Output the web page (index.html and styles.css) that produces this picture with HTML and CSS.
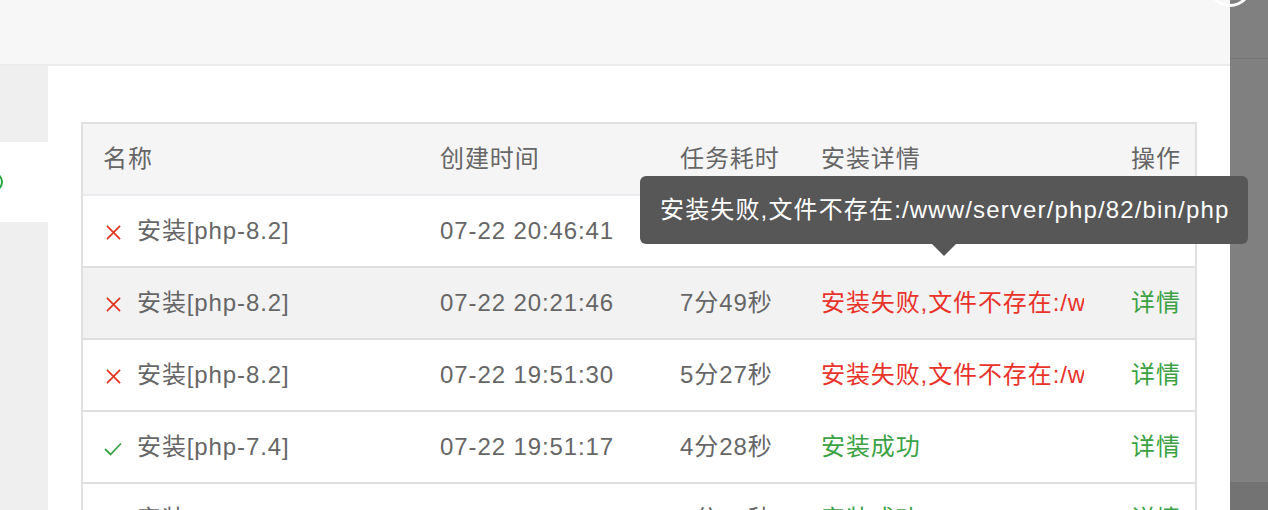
FILE: index.html
```html
<!DOCTYPE html>
<html lang="zh-CN">
<head>
    <meta charset="UTF-8">
    <meta name="viewport" content="width=device-width, initial-scale=1.0">
    <title>安装任务</title>
    <link rel="stylesheet" href="styles.css">
</head>
<body>

<div class="page">
    <div class="dialog">
        <div class="dlg-head"></div>
        <div class="dlg-body">
            <div class="side">
                <div class="side-item"></div>
                <div class="side-item active"><span class="ring"></span></div>
                <div class="side-item"></div>
            </div>
            <div class="main">
                <div class="tbl-wrap">
                    <table class="tbl">
                        <colgroup>
                            <col class="c-name">
                            <col class="c-time">
                            <col class="c-cost">
                            <col class="c-info">
                            <col class="c-op">
                        </colgroup>
                        <thead>
                            <tr>
                                <th>名称</th>
                                <th>创建时间</th>
                                <th>任务耗时</th>
                                <th>安装详情</th>
                                <th class="op">操作</th>
                            </tr>
                        </thead>
                        <tbody>
                            <tr>
                                <td><span class="st"><svg class="ico-x" viewBox="0 0 16 16"><path d="M1 1L15 15M15 1L1 15"/></svg></span>安装[php-8.2]</td>
                                <td>07-22 20:46:41</td>
                                <td>8分12秒</td>
                                <td><div class="info fail">安装失败,文件不存在:/www/server/php/82/bin/php</div></td>
                                <td class="op"><a class="link">详情</a></td>
                            </tr>
                            <tr class="hover">
                                <td><span class="st"><svg class="ico-x" viewBox="0 0 16 16"><path d="M1 1L15 15M15 1L1 15"/></svg></span>安装[php-8.2]</td>
                                <td>07-22 20:21:46</td>
                                <td>7分49秒</td>
                                <td><div class="info fail">安装失败,文件不存在:/www/server/php/82/bin/php</div></td>
                                <td class="op"><a class="link">详情</a></td>
                            </tr>
                            <tr>
                                <td><span class="st"><svg class="ico-x" viewBox="0 0 16 16"><path d="M1 1L15 15M15 1L1 15"/></svg></span>安装[php-8.2]</td>
                                <td>07-22 19:51:30</td>
                                <td>5分27秒</td>
                                <td><div class="info fail">安装失败,文件不存在:/www/server/php/82/bin/php</div></td>
                                <td class="op"><a class="link">详情</a></td>
                            </tr>
                            <tr>
                                <td><span class="st"><svg class="ico-ok" viewBox="0 0 18 14"><path d="M1 7L6.5 12.5L17 1.5"/></svg></span>安装[php-7.4]</td>
                                <td>07-22 19:51:17</td>
                                <td>4分28秒</td>
                                <td><div class="info ok">安装成功</div></td>
                                <td class="op"><a class="link">详情</a></td>
                            </tr>
                            <tr>
                                <td><span class="st"><svg class="ico-ok" viewBox="0 0 18 14"><path d="M1 7L6.5 12.5L17 1.5"/></svg></span>安装[php-7.3]</td>
                                <td>07-22 19:51:03</td>
                                <td>3分14秒</td>
                                <td><div class="info ok">安装成功</div></td>
                                <td class="op"><a class="link">详情</a></td>
                            </tr>
                        </tbody>
                    </table>
                </div>
            </div>
        </div>
    </div>
    <div class="mask">
        <div class="mask-top"></div>
        <div class="mask-mid"></div>
        <div class="mask-bot"></div>
    </div>

    <span class="close-btn"></span>

    <div class="tip">安装失败,文件不存在:/www/server/php/82/bin/php<i class="tip-arrow"></i></div>
</div>

</body>
</html>
```

FILE: styles.css
```css
* {
    box-sizing: border-box;
}

html, body {
    margin: 0;
    height: 510px;
    overflow: hidden;
}

body {
    font-family: "Liberation Sans", "Noto Sans CJK SC", sans-serif;
    font-size: 24px;
    color: #666;
    letter-spacing: 0.9px;
}

.page {
    position: relative;
    display: flex;
    width: 1268px;
    height: 510px;
    overflow: hidden;
}

/* dialog */
.dialog {
    width: 1230px;
    flex: none;
    display: flex;
    flex-direction: column;
    background: #fff;
}

.dlg-head {
    height: 66px;
    flex: none;
    background: #f7f7f7;
    border-bottom: 2px solid #ebebeb;
}

.dlg-body {
    flex: 1;
    display: flex;
    min-height: 0;
}

.side {
    width: 48px;
    flex: none;
    display: flex;
    flex-direction: column;
    background: #efefef;
    overflow: hidden;
}

.side-item {
    height: 76px;
    flex: none;
}

.side-item.active {
    height: 80px;
    display: flex;
    align-items: center;
    background: #fff;
}

.ring {
    width: 20px;
    height: 20px;
    margin-left: -17px;
    border: 2px solid #20a53a;
    border-radius: 50%;
}

.main {
    flex: 1;
    padding: 56px 33px 0;
}

/* table */
.tbl-wrap {
    border: 2px solid #e0e0e0;
    border-bottom: none;
}

.tbl {
    width: 100%;
    table-layout: fixed;
    border-collapse: separate;
    border-spacing: 0;
}

.c-name { width: 337px; }
.c-time { width: 240px; }
.c-cost { width: 141px; }
.c-info { width: 310px; }
.c-op { width: 84px; }

.tbl th,
.tbl td {
    height: 72px;
    padding: 0 20px;
    line-height: 30px;
    text-align: left;
    vertical-align: middle;
    white-space: nowrap;
}

.tbl th {
    font-weight: normal;
    background: #f5f5f5;
    border-bottom: 2px solid #ebebf0;
}

.tbl td {
    border-bottom: 2px solid #dedede;
}

.tbl .op {
    text-align: right;
    padding-right: 20px;
}

.tbl tr.hover td {
    background: #f2f2f2;
}

.st {
    display: inline-block;
    width: 20px;
    margin-right: 14px;
    text-align: center;
    vertical-align: -1px;
}

.st svg {
    display: block;
    margin: 0 auto;
    fill: none;
    stroke-width: 1.8;
}

.ico-x {
    width: 15px;
    height: 15px;
    stroke: #e1321f;
}

.ico-ok {
    width: 18px;
    height: 14px;
    stroke: #3ba244;
}

.info {
    width: 263px;
    overflow: hidden;
}

.info.fail {
    color: #e8332b;
}

.info.ok,
.link {
    color: #3ba244;
}

/* grey overlay on the right */
.mask {
    flex: 1;
    display: flex;
    flex-direction: column;
    background: #808080;
}

.mask-top {
    height: 59px;
    border-bottom: 1px solid #747474;
}

.mask-mid {
    height: 423px;
}

.mask-bot {
    flex: 1;
    background: #737373;
}

.close-btn {
    position: absolute;
    left: 1208px;
    top: -37px;
    width: 44px;
    height: 44px;
    border: 3px solid #fff;
    border-radius: 50%;
}

/* tooltip */
.tip {
    position: absolute;
    left: 640px;
    top: 176px;
    width: 608px;
    height: 68px;
    padding: 0 20px;
    line-height: 68px;
    letter-spacing: 1.15px;
    color: #fff;
    white-space: nowrap;
    background: #575757;
    border-radius: 6px;
}

.tip-arrow {
    position: absolute;
    left: 292px;
    top: 68px;
    border-style: solid;
    border-width: 12px 12px 0;
    border-color: #575757 transparent transparent;
}
```
